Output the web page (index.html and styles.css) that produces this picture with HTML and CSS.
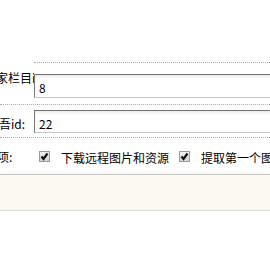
FILE: index.html
```html
<!DOCTYPE html>
<html lang="zh-CN">
<head>
<meta charset="utf-8">
<link rel="stylesheet" href="styles.css">
</head>
<body>
<div class="top"></div>
<div class="form">
  <div class="row r1">
    <div class="label"><span class="lt lt1">家栏目id:</span></div>
    <div class="field"><input class="txt t1" type="text" value="8"></div>
  </div>
  <div class="row r2">
    <div class="label"><span class="lt lt2">吾id:</span></div>
    <div class="field"><input class="txt t2" type="text" value="22"></div>
  </div>
  <div class="row r3">
    <div class="label"><span class="lt lt3">项:</span></div>
    <div class="opts">
      <span class="cb"><svg width="9" height="9" viewBox="0 0 9 9"><path d="M1.5 4.5 L3.5 7 L7.5 1.5" fill="none" stroke="#111" stroke-width="2.2"/></svg></span>
      <span class="opt">下载远程图片和资源</span>
      <span class="cb cb2"><svg width="9" height="9" viewBox="0 0 9 9"><path d="M1.5 4.5 L3.5 7 L7.5 1.5" fill="none" stroke="#111" stroke-width="2.2"/></svg></span>
      <span class="opt">提取第一个图片为缩略图</span>
    </div>
  </div>
  <div class="bar"></div>
</div>
</body>
</html>
```
FILE: styles.css
```css
html, body {
  margin: 0;
  padding: 0;
  background: #fff;
  overflow: hidden;
}
body {
  font-family: "Noto Sans CJK SC", "Noto Sans", sans-serif;
  font-size: 12px;
  color: #000;
}
.top {
  height: 62px;
}
.form {
  overflow: hidden;
  width: 270px;
}
.row {
  display: flex;
}
.label {
  width: 34px;
  flex: none;
  overflow: hidden;
  white-space: nowrap;
  line-height: 16px;
}
.lt {
  display: block;
}
.field {
  flex: 1;
  min-width: 0;
}
.r1 .label {
  padding-top: 8px;
}
.lt1 {
  margin-left: -4px;
}
.r1 .field {
  border-top: 1px dotted #aaa;
  padding: 11px 0 6px;
}
.r2, .r3 {
  border-top: 1px dotted #aaa;
}
.r2 .label {
  padding-top: 11px;
}
.lt2 {
  margin-left: -1px;
}
.r2 .field {
  padding: 5px 0 4px;
}
.txt {
  display: block;
  width: 300px;
  margin: 0;
  box-sizing: border-box;
  border: 1px solid;
  border-color: #707070 #c8c8c8 #c8c8c8 #7a7a7a;
  box-shadow: inset 0 2px 3px rgba(0, 0, 0, 0.08);
  background: #fff;
  font-family: "Noto Sans CJK SC", "Noto Sans", sans-serif;
  font-size: 12px;
  color: #000;
  padding: 3px 0 0 4px;
  outline: none;
}
.t1 { height: 24px; }
.t2 { height: 23px; }
.r3 {
  height: 36px;
  align-items: center;
}
.r3 .label {
  padding-top: 2px;
}
.lt3 {
  margin-left: -3px;
}
.opts {
  display: flex;
  align-items: center;
  white-space: nowrap;
  flex: 1;
  min-width: 0;
}
.cb {
  width: 11px;
  height: 11px;
  box-sizing: border-box;
  border: 1px solid #9a9a9a;
  background: linear-gradient(#f2f2f2, #d4d4d4);
  display: flex;
  align-items: center;
  justify-content: center;
  margin-left: 5px;
  flex: none;
}
.cb2 {
  margin-left: 10px;
}
.opt {
  margin-left: 11px;
  padding-top: 3px;
}
.bar {
  height: 35px;
  background: #fafaf0;
  border-top: 1px solid #c8c8c8;
  border-bottom: 1px solid #dcdcd4;
  box-shadow: 0 -2px 2px rgba(0, 0, 0, 0.03);
}
```
